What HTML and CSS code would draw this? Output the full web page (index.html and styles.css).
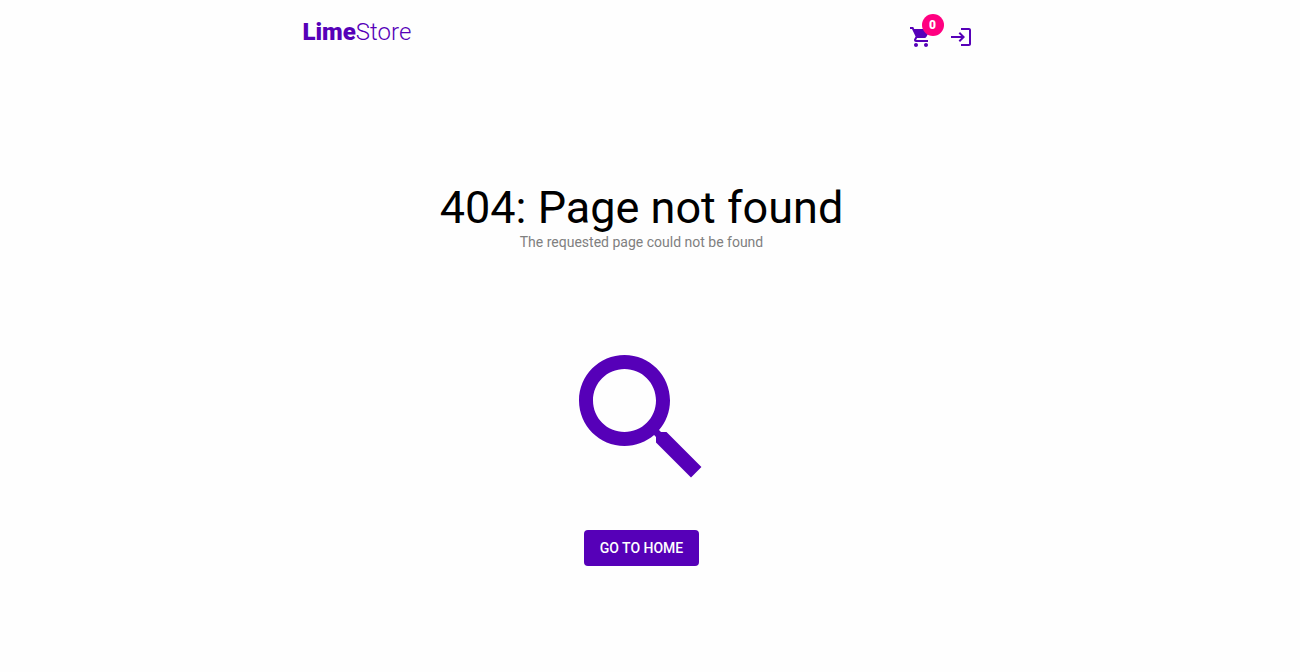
FILE: index.html
```html
<!DOCTYPE html>
<html lang="en">

<head>
  <meta charset="UTF-8">
  <meta name="viewport" content="width=device-width, initial-scale=1.0">
  <title>LimeStore</title>
  <link rel="stylesheet" href="styles.css">
</head>

<body>
  <header class="navbar">
    <a class="logo" href="#"><b>Lime</b>Store</a>
    <nav class="nav-icons">
      <a class="icon-link" href="#" aria-label="Cart">
        <svg class="icon" viewBox="0 0 24 24">
          <path d="M7 18c-1.1 0-1.99.9-1.99 2S5.9 22 7 22s2-.9 2-2-.9-2-2-2zM1 2v2h2l3.6 7.59-1.35 2.45c-.16.28-.25.61-.25.96 0 1.1.9 2 2 2h12v-2H7.42c-.14 0-.25-.11-.25-.25l.03-.12.9-1.63h7.45c.75 0 1.41-.41 1.75-1.03l3.58-6.49c.08-.14.12-.31.12-.48 0-.55-.45-1-1-1H5.21l-.94-2H1zm16 16c-1.1 0-1.99.9-1.99 2s.89 2 1.99 2 2-.9 2-2-.9-2-2-2z"/>
        </svg>
        <span class="badge">0</span>
      </a>
      <a class="icon-link" href="#" aria-label="Log in">
        <svg class="icon" viewBox="0 0 24 24">
          <path d="M11 7 9.6 8.4l2.6 2.6H2v2h10.2l-2.6 2.6L11 17l5-5-5-5zm9 12h-8v2h8c1.1 0 2-.9 2-2V5c0-1.1-.9-2-2-2h-8v2h8v14z"/>
        </svg>
      </a>
    </nav>
  </header>

  <main class="not-found">
    <h1>404: Page not found</h1>
    <p>The requested page could not be found</p>
    <svg class="search-icon" viewBox="0 0 24 24" aria-hidden="true">
      <path d="M15.5 14h-.79l-.28-.27C15.41 12.59 16 11.11 16 9.5 16 5.91 13.09 3 9.5 3S3 5.91 3 9.5 5.91 16 9.5 16c1.61 0 3.09-.59 4.23-1.57l.27.28v.79l5 4.99L20.49 19l-4.99-5zm-6 0C7.01 14 5 11.99 5 9.5S7.01 5 9.5 5 14 7.01 14 9.5 11.99 14 9.5 14z"/>
    </svg>
    <button class="home-btn" type="button">GO TO HOME</button>
  </main>
</body>

</html>
```
FILE: styles.css
```css
* {
  margin: 0;
  padding: 0;
  box-sizing: border-box;
}

body {
  padding-right: 17px;
  font-family: Roboto, "Liberation Sans", sans-serif;
  background-color: #fefefe;
}

.navbar {
  max-width: 700px;
  height: 64px;
  margin: 0 auto;
  padding: 0 19px 0 11px;
  display: flex;
  justify-content: space-between;
  align-items: center;
}

.logo {
  color: #5600b8;
  font-size: 24px;
  font-weight: 300;
  text-decoration: none;
}

.logo b {
  font-weight: 900;
}

.nav-icons {
  display: flex;
  gap: 16px;
  padding-top: 10px;
}

.icon-link {
  position: relative;
  display: flex;
}

.icon {
  width: 24px;
  height: 24px;
  fill: #5600b8;
}

.badge {
  position: absolute;
  top: -11px;
  right: -11px;
  width: 22px;
  height: 22px;
  border-radius: 50%;
  background-color: #ff0080;
  color: white;
  font-size: 12px;
  font-weight: 900;
  line-height: 22px;
  text-align: center;
}

.not-found {
  padding-top: 118px;
  display: flex;
  flex-direction: column;
  align-items: center;
}

.not-found h1 {
  font-size: 45px;
  font-weight: 400;
  line-height: 52px;
  text-align: center;
}

.not-found p {
  color: gray;
  font-size: 14px;
  line-height: 16px;
  text-align: center;
}

.search-icon {
  width: 168px;
  height: 168px;
  margin: 84px 0 28px;
  fill: #5600b8;
}

.home-btn {
  padding: 6px 16px;
  border: none;
  border-radius: 4px;
  background-color: #5600b8;
  color: white;
  font-family: inherit;
  font-size: 14px;
  font-weight: 500;
  line-height: 24px;
  cursor: pointer;
}
```
